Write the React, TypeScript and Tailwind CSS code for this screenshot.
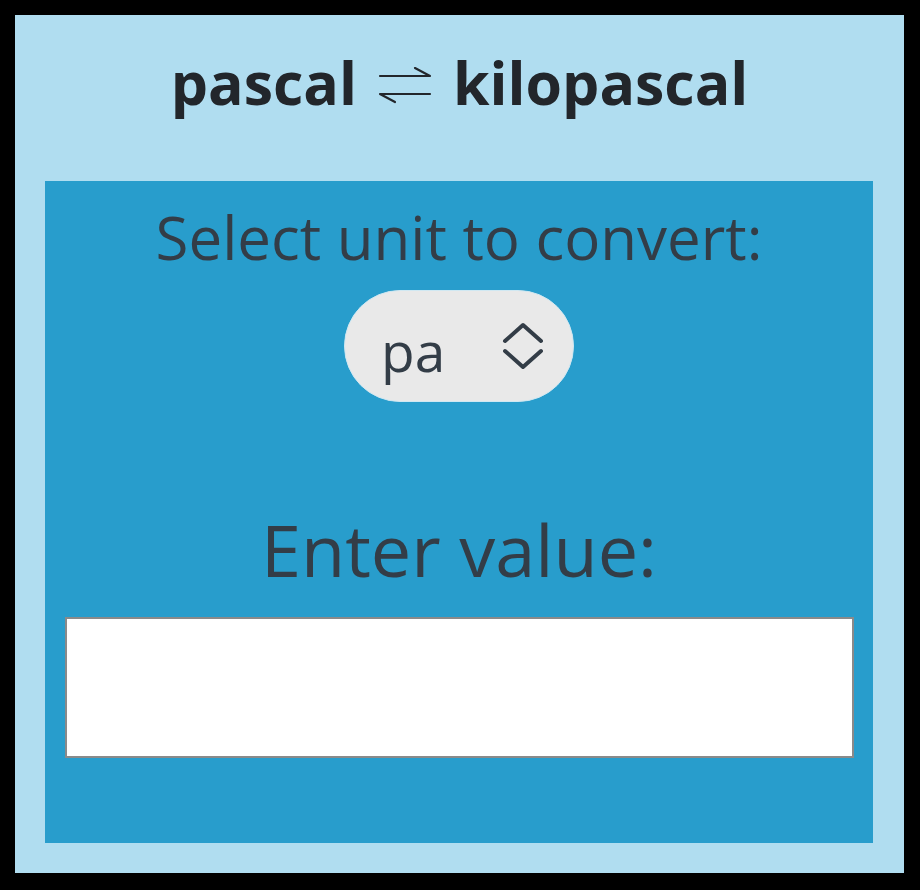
import React from "react";

export default function App() {
  return (
    <div className="w-[920px] h-[890px] bg-[#000] pt-[15px] pl-[15px]" style={{ fontFamily: '"Open Sans", "Noto Sans", sans-serif' }}>
      <div className="w-[889px] h-[858px] bg-[#b0ddf0] flex flex-col">
        <div className="h-[166px] pt-[38px] flex justify-center">
          <h1 className="text-[59px] font-bold text-[#22262b] leading-none h-[59px] whitespace-nowrap flex items-start">
            <span>pascal</span>
            <svg className="mx-[21px] mt-[14px]" width="54" height="38" viewBox="0 0 54 38" fill="none" stroke="#22262b" strokeWidth="2.2" strokeLinecap="round" strokeLinejoin="round" aria-label="⇌" role="img">
              <path d="M2 9 H52 L37 1" />
              <path d="M52 27 H2 L17 35" />
            </svg>
            <span>kilopascal</span>
          </h1>
        </div>
        <div className="ml-[30px] w-[828px] h-[662px] bg-[#289dcc] flex flex-col items-center">
          <div className="mt-[26px] text-[60px] leading-[60px] text-[#333d47] whitespace-nowrap">Select unit to convert:</div>
          <div className="mt-[23px] w-[230px] h-[112px] rounded-full bg-[#e9e9e9] border border-[#d0e8f2] flex items-center pl-[36px] pr-[29px] justify-between">
            <span className="text-[55px] text-[#333d47] leading-none pt-[8px]">pa</span>
            <svg width="42" height="48" viewBox="0 0 42 48" fill="none" stroke="#333d47" strokeWidth="4" strokeLinecap="round" strokeLinejoin="round">
              <path d="M3 19 L21 3 L39 19" />
              <path d="M3 29 L21 45 L39 29" />
            </svg>
          </div>
          <div className="mt-[111px] text-[72px] leading-[72px] text-[#333d47] whitespace-nowrap">Enter value:</div>
          <input className="mt-[32px] w-[789px] h-[141px] bg-white border-2 border-[#8a8a8a] outline-none" />
        </div>
      </div>
    </div>
  );
}
